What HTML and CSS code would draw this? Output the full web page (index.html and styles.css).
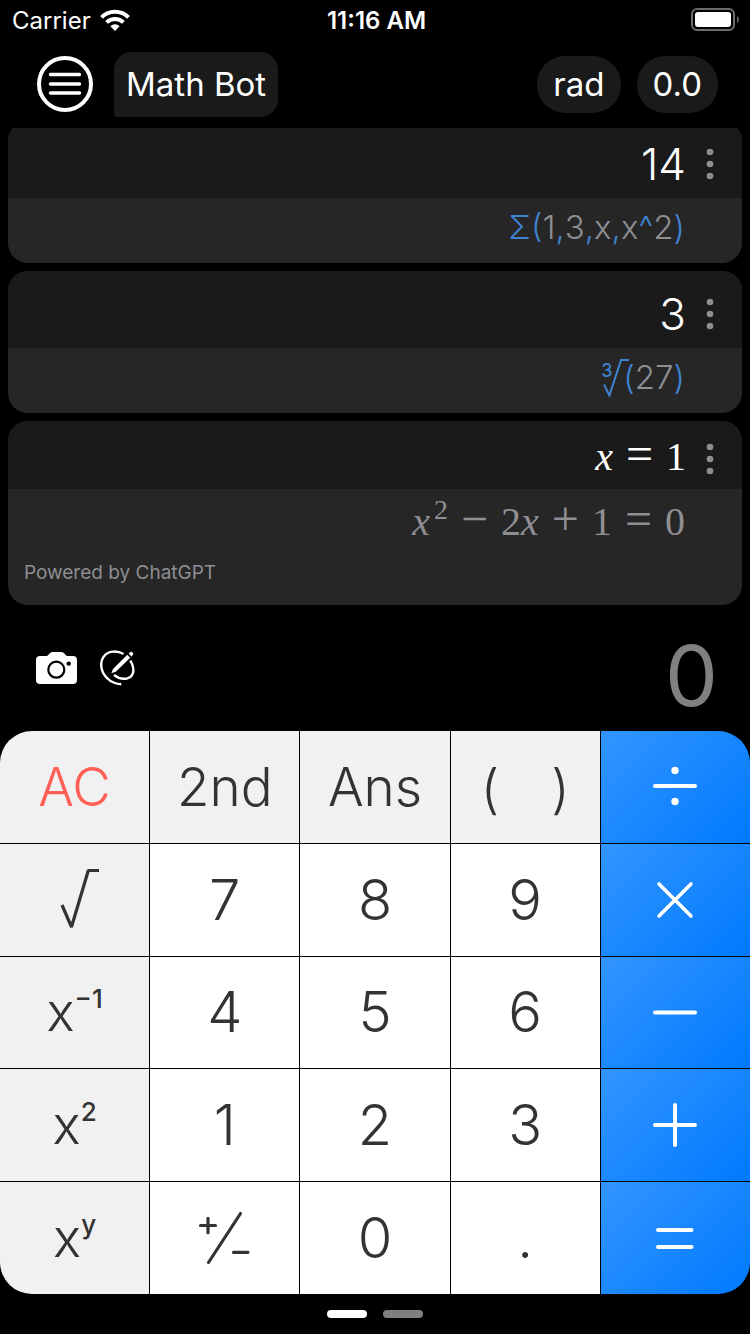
FILE: index.html
```html
<!DOCTYPE html>
<html lang="en">
<head>
  <meta charset="UTF-8">
  <meta name="viewport" content="width=device-width, initial-scale=1.0">
  <title>Calculator</title>
  <link rel="stylesheet" href="styles.css">
</head>
<body>
  <div class="status-bar">
    <div class="carrier">
      <span>Carrier</span>
      <svg width="30" height="22" viewBox="0 0 30 22" fill="none" stroke="#fff" stroke-width="4">
        <path d="M1.500 8.300a19.200 19.200 0 0 1 27 0"/>
        <path d="M6.600 13.400a12 12 0 0 1 16.800 0"/>
        <path d="M15 22l-4.600-4.800a6.600 6.600 0 0 1 9.200 0z" fill="#fff" stroke="none"/>
      </svg>
    </div>
    <div class="time">11:16 AM</div>
    <div class="battery">
      <svg width="50" height="24" viewBox="0 0 50 24">
        <rect x="1" y="1" width="42" height="21" rx="5" fill="none" stroke="#6b6b6b" stroke-width="2"/>
        <rect x="4" y="4" width="36" height="15" rx="3" fill="#fff"/>
        <path d="M46 8c2.400 1 2.400 6 0 7z" fill="#6b6b6b"/>
      </svg>
    </div>
  </div>

  <header class="header">
    <button type="button" class="menu-btn" aria-label="Menu">
      <svg width="56" height="56" viewBox="0 0 56 56" fill="none" stroke="#fff" stroke-linecap="round">
        <circle cx="28" cy="28" r="26" stroke-width="4"/>
        <path d="M13.500 18.500h29M13.500 28h29M13.500 37h29" stroke-width="3.500"/>
      </svg>
    </button>
    <button type="button" class="bot-btn">Math Bot</button>
    <div class="modes">
      <button type="button" class="pill">rad</button>
      <button type="button" class="pill">0.0</button>
    </div>
  </header>

  <main class="history">
    <article class="card">
      <div class="result">
        <span>14</span>
        <button type="button" class="more-btn" aria-label="More">
          <svg width="8" height="32" viewBox="0 0 8 32" fill="#8e8e93"><circle cx="4" cy="4" r="3.300"/><circle cx="4" cy="16" r="3.300"/><circle cx="4" cy="28" r="3.300"/></svg>
        </button>
      </div>
      <div class="expression"><b>Σ(</b>1<b>,</b>3<b>,</b>x<b>,</b>x<b>^</b>2<b>)</b></div>
    </article>

    <article class="card">
      <div class="result">
        <span>3</span>
        <button type="button" class="more-btn" aria-label="More">
          <svg width="8" height="32" viewBox="0 0 8 32" fill="#8e8e93"><circle cx="4" cy="4" r="3.300"/><circle cx="4" cy="16" r="3.300"/><circle cx="4" cy="28" r="3.300"/></svg>
        </button>
      </div>
      <div class="expression">
        <span class="root">
          <sup>3</sup>
          <svg width="28" height="40" viewBox="0 0 28 40" fill="none" stroke="#3f82d0" stroke-width="2"><path d="M3 27.500L8.400 38.500L20 3H28"/></svg>
        </span><b>(</b>27<b>)</b>
      </div>
    </article>

    <article class="card">
      <div class="result equation">
        <span><i>x</i><span class="op">=</span>1</span>
        <button type="button" class="more-btn" aria-label="More">
          <svg width="8" height="32" viewBox="0 0 8 32" fill="#8e8e93"><circle cx="4" cy="4" r="3.300"/><circle cx="4" cy="16" r="3.300"/><circle cx="4" cy="28" r="3.300"/></svg>
        </button>
      </div>
      <div class="expression equation">
        <i>x</i><sup>2</sup><span class="op">−</span>2<i>x</i><span class="op">+</span>1<span class="op">=</span>0
      </div>
      <p class="powered">Powered by ChatGPT</p>
    </article>
  </main>

  <section class="entry">
    <button type="button" class="tool-btn" aria-label="Camera">
      <svg width="41" height="32" viewBox="0 0 41 32">
        <path d="M4 4h6.500c2 0 3-4 6-4h9c3 0 4 4 6 4H37a4 4 0 0 1 4 4v20a4 4 0 0 1-4 4H4a4 4 0 0 1-4-4V8a4 4 0 0 1 4-4z" fill="#fff"/>
        <circle cx="20.300" cy="17.700" r="8" fill="none" stroke="#000" stroke-width="2.200"/>
        <circle cx="32.700" cy="11.600" r="2.200"/>
      </svg>
    </button>
    <button type="button" class="tool-btn" aria-label="Handwriting">
      <svg width="38" height="38" viewBox="0 0 38 38" fill="none" stroke="#fff" stroke-width="2.400">
        <path d="M24.500 5C19 1.700 10.500 1.500 6 6C-.5 13 2 23.500 8.500 29.500C12 33 17 35 22.300 35.300"/>
        <path d="M31.300 11.500C36 19.500 35.500 27 28.500 29.300C24 30.500 18.500 28.800 15 26"/>
        <path d="M12.300 24.300L14 20L28.300 5.800L31.200 8.700L16.800 22.800z" fill="#fff" stroke="none"/>
        <path d="M29.600 4.600L31 3.200a2 2 0 0 1 2.800 2.800L32.400 7.400z" fill="#fff" stroke="none"/>
      </svg>
    </button>
    <output class="display">0</output>
  </section>

  <section class="keypad">
    <button type="button" class="key fn clear">AC</button>
    <button type="button" class="key fn">2nd</button>
    <button type="button" class="key fn">Ans</button>
    <button type="button" class="key fn parens"><span>(</span><span>)</span></button>
    <button type="button" class="key operator" aria-label="Divide">
      <svg width="48" height="48" viewBox="0 0 48 48" fill="none" stroke="#fff" stroke-width="4" stroke-linecap="round"><path d="M4 23H44"/><circle cx="24" cy="7.500" r="3.700" fill="#fff" stroke="none"/><circle cx="24" cy="38.500" r="3.700" fill="#fff" stroke="none"/></svg>
    </button>

    <button type="button" class="key fn" aria-label="Square root">
      <svg width="56" height="64" viewBox="0 0 56 64" fill="none" stroke="#333" stroke-width="3.200"><path d="M15 37L24.500 59L41.300 2.500H52" stroke-linejoin="bevel"/></svg>
    </button>
    <button type="button" class="key">7</button>
    <button type="button" class="key">8</button>
    <button type="button" class="key">9</button>
    <button type="button" class="key operator" aria-label="Multiply">
      <svg width="48" height="48" viewBox="0 0 48 48" fill="none" stroke="#fff" stroke-width="3.600" stroke-linecap="round"><path d="M8 8L40 40M40 8L8 40"/></svg>
    </button>

    <button type="button" class="key fn power">x<sup>−1</sup></button>
    <button type="button" class="key">4</button>
    <button type="button" class="key">5</button>
    <button type="button" class="key">6</button>
    <button type="button" class="key operator" aria-label="Subtract">
      <svg width="48" height="48" viewBox="0 0 48 48" fill="none" stroke="#fff" stroke-width="4" stroke-linecap="round"><path d="M4 24.500H44"/></svg>
    </button>

    <button type="button" class="key fn power">x<sup>2</sup></button>
    <button type="button" class="key">1</button>
    <button type="button" class="key">2</button>
    <button type="button" class="key">3</button>
    <button type="button" class="key operator" aria-label="Add">
      <svg width="48" height="48" viewBox="0 0 48 48" fill="none" stroke="#fff" stroke-width="4" stroke-linecap="round"><path d="M4 24H44M24 4V44"/></svg>
    </button>

    <button type="button" class="key fn power">x<sup>y</sup></button>
    <button type="button" class="key" aria-label="Plus or minus">
      <svg width="56" height="56" viewBox="0 0 56 56" fill="none" stroke="#333" stroke-width="3.200" stroke-linecap="round"><path d="M3.500 15.500H18.500M11 8.300V22.700M43.500 3.500L11.500 52.500M36.500 42.300H51"/></svg>
    </button>
    <button type="button" class="key">0</button>
    <button type="button" class="key">.</button>
    <button type="button" class="key operator" aria-label="Equals">
      <svg width="48" height="48" viewBox="0 0 48 48" fill="none" stroke="#fff" stroke-width="4" stroke-linecap="round"><path d="M7 16H40.500M7 33H40.500"/></svg>
    </button>
  </section>

  <nav class="pager">
    <a href="#page1" class="page active" aria-label="Page 1"></a>
    <a href="#page2" class="page" aria-label="Page 2"></a>
  </nav>
</body>
</html>
```
FILE: styles.css
```css
* {
  box-sizing: border-box;
}
body {
  margin: 0;
  height: 100vh;
  display: flex;
  flex-direction: column;
  background: #000;
  color: #fff;
  font-family: Inter, "Liberation Sans", sans-serif;
}
button {
  margin: 0;
  padding: 0;
  border: none;
  background: none;
  color: inherit;
  font: inherit;
  cursor: pointer;
}
svg {
  display: block;
}
.status-bar {
  display: grid;
  grid-template-columns: 1fr auto 1fr;
  align-items: center;
  height: 40px;
  padding: 0 9px 0 12px;
  font-size: 24px;
}
.carrier {
  display: flex;
  align-items: center;
  gap: 9px;
}
.time {
  font-weight: 600;
}
.battery {
  justify-self: end;
}
.header {
  display: flex;
  align-items: center;
  height: 88px;
  padding: 0 32px 0 37px;
  font-size: 33px;
}
.bot-btn {
  height: 65px;
  margin-left: 21px;
  padding: 0 12px;
  border-radius: 18px 18px 18px 4px;
  background: #1a1a1a;
}
.modes {
  display: flex;
  gap: 16px;
  margin-left: auto;
}
.pill {
  height: 57px;
  padding: 0 16px;
  border-radius: 28px;
  background: #1a1a1a;
}

/* history list sticks to the bottom, older cards scroll out at the top */
.history {
  flex: 1;
  min-height: 0;
  display: flex;
  flex-direction: column;
  justify-content: flex-end;
  gap: 8px;
  padding: 0 8px;
  overflow: hidden;
}
.card {
  flex: none;
  border-radius: 20px;
  background: #262626;
  overflow: hidden;
}
.result {
  display: flex;
  justify-content: flex-end;
  align-items: center;
  gap: 20px;
  height: 77px;
  padding: 8px 28px 0 16px;
  background: #1a1a1a;
  font-size: 44px;
  font-weight: 300;
}
.expression {
  display: flex;
  justify-content: flex-end;
  align-items: center;
  height: 65px;
  padding: 0 57px 8px 16px;
  color: #8e8e93;
  font-size: 33px;
  font-weight: 300;
}
.expression b {
  color: #3f82d0;
  font-weight: 300;
}
.root {
  position: relative;
  margin-right: -6px;
  color: #3f82d0;
}
.root sup {
  position: absolute;
  top: 4px;
  left: 0;
  font-size: 18px;
  font-weight: 500;
  line-height: 20px;
}
.equation {
  font-family: "Liberation Serif", serif;
  font-size: 40px;
  font-weight: 400;
}
.result.equation {
  height: 68px;
}
.result.equation > span {
  padding-bottom: 8px;
}
.expression.equation {
  display: block;
  padding-bottom: 0;
  line-height: 66px;
  text-align: right;
}
.expression.equation sup {
  padding-left: 4px;
  font-size: 28px;
  line-height: 1;
  vertical-align: 16px;
}
.op {
  padding: 0 13px;
  font-size: 48px;
  line-height: 1;
}
.powered {
  margin: 0;
  padding: 7px 16px 20px;
  color: #8e8e93;
  font-size: 19px;
  line-height: 24px;
}
.entry {
  display: flex;
  align-items: center;
  gap: 22px;
  height: 126px;
  padding: 0 32px 0 36px;
}
.display {
  margin-left: auto;
  padding-top: 14px;
  color: #808080;
  font-size: 84px;
}
.keypad {
  flex: 0 0 563px;
  display: grid;
  grid-template-columns: repeat(5, 1fr);
  grid-template-rows: repeat(5, 1fr);
  gap: 1px;
  border-radius: 32px;
  overflow: hidden;
}
.key {
  display: flex;
  justify-content: center;
  align-items: center;
  background: #fff;
  color: #333;
  font-size: 56px;
  font-weight: 300;
}
.fn {
  background: #f1f1f1;
  font-size: 53px;
}
.clear {
  color: #ff5f57;
}
.parens {
  gap: 52px;
  padding-top: 4px;
}
.power sup {
  padding-bottom: 28px;
  font-size: 26px;
  font-weight: 500;
}
.operator {
  background: linear-gradient(135deg, #3395ff, #007aff);
}
.pager {
  display: flex;
  justify-content: center;
  align-items: center;
  gap: 16px;
  height: 40px;
}
.page {
  width: 40px;
  height: 8px;
  border-radius: 4px;
  background: #808080;
}
.page.active {
  background: #fff;
}
```
